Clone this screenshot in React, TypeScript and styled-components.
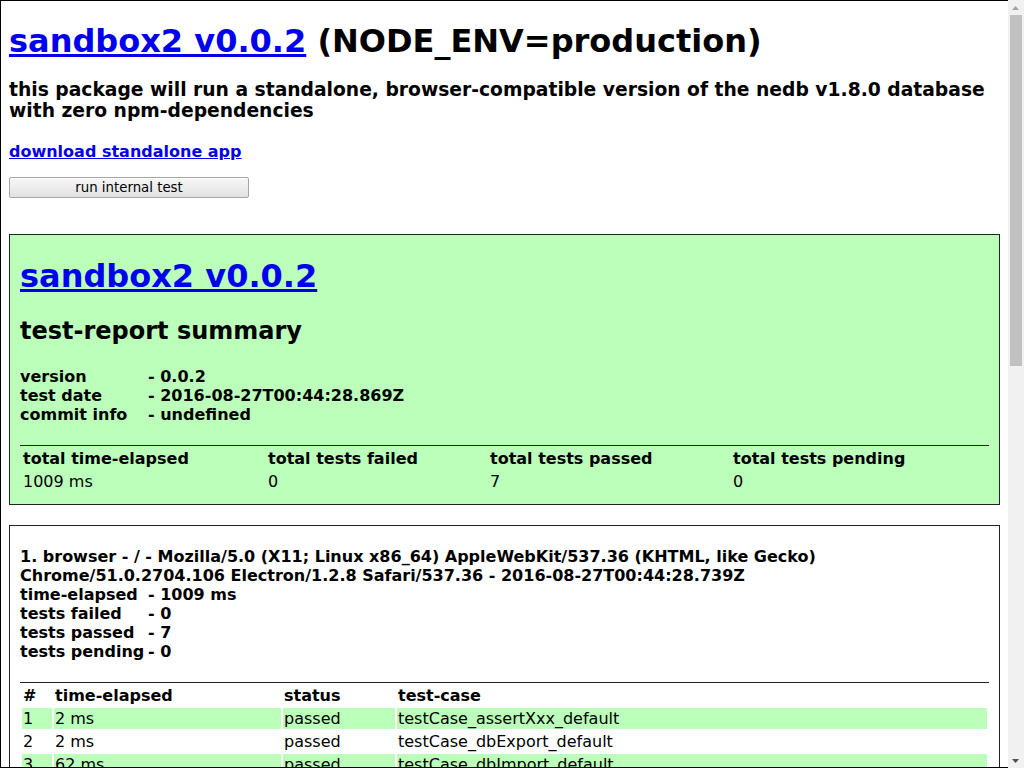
import React from "react";
import styled, { createGlobalStyle } from "styled-components";

const GlobalStyle = createGlobalStyle`
  html, body {
    margin: 0;
    padding: 0;
    height: 100%;
    overflow: hidden;
    background: #fff;
  }
  body {
    font-family: "DejaVu Sans", "Liberation Sans", sans-serif;
    color: #000;
  }
`;

const Window = styled.div`
  display: flex;
  height: 768px;
`;

const Viewport = styled.div`
  flex: 1;
  min-width: 0;
  box-sizing: border-box;
  border: 1px solid #000;
  border-right: 0;
  overflow: hidden;
`;

const ScrollBar = styled.div`
  flex: none;
  width: 16px;
  display: flex;
  flex-direction: column;
  background: #f1f1f1;
`;

const ScrollArrow = styled.div`
  flex: none;
  height: 15px;
  display: flex;
  align-items: center;
  justify-content: center;
  padding-right: 1px;
`;

const ScrollTrack = styled.div`
  flex: 1;
  display: flex;
  flex-direction: column;
`;

const ScrollThumb = styled.div`
  height: 351px;
  margin: 0 2px 0 2px;
  background: #c1c1c1;
`;

const Page = styled.div`
  margin: 8px;
`;

const Link = styled.a`
  color: #0000ee;
  text-decoration: underline;
  cursor: pointer;
`;

const MainTitle = styled.h1`
  font-size: 32px;
  font-weight: bold;
  margin: 21.44px 0 18px;
`;

const Tagline = styled.h3`
  font-size: 18.72px;
  font-weight: bold;
  margin: 18.72px 0;
`;

const DownloadLine = styled.h4`
  font-size: 16px;
  font-weight: bold;
  margin: 21.28px 0 16px;
`;

const ButtonRow = styled.div`
  display: flex;
  margin-bottom: 36px;
`;

const RunButton = styled.button`
  box-sizing: border-box;
  width: 240px;
  height: 21px;
  padding: 0 6px;
  font-family: "DejaVu Sans", sans-serif;
  font-size: 13.33px;
  color: #000;
  background: linear-gradient(#f7f7f7, #e2e2e2);
  border: 1px solid #a6a6a6;
  border-radius: 2px;
  box-shadow: inset 0 1px 0 #fff;
`;

const ReportCard = styled.div<{ $summary?: boolean }>`
  border: 1px solid #222;
  background: ${(p) => (p.$summary ? "#bbffbb" : "#fff")};
  margin-top: 20px;
  padding: 0 10px 10px;
  text-align: left;
`;

const CardTitle = styled.h1`
  font-size: 32px;
  font-weight: bold;
  margin: 21.44px 0 22.44px;
`;

const CardHeading = styled.h2`
  font-size: 24px;
  font-weight: bold;
  margin: 19.92px 0;
`;

const InfoBlock = styled.h4`
  font-size: 16px;
  font-weight: bold;
  margin: 21.28px 0;
`;

const InfoLabel = styled.span`
  display: inline-block;
  width: 8em;
`;

const ReportTable = styled.table`
  width: 100%;
  border-top: 1px solid #222;
  border-spacing: 2px;
  table-layout: fixed;
  text-align: left;
  font-size: 16px;
`;

const HeadCell = styled.th<{ $w?: number }>`
  box-sizing: border-box;
  padding: 1px;
  font-weight: bold;
  white-space: nowrap;
  width: ${(p) => (p.$w ? `${p.$w}px` : "auto")};
`;

const Row = styled.tr<{ $alt?: boolean }>`
  background: ${(p) => (p.$alt ? "#bbffbb" : "transparent")};
`;

const Cell = styled.td`
  padding: 1px;
  white-space: nowrap;
  overflow: hidden;
`;

const summaryInfo = [
  ["version", "- 0.0.2"],
  ["test date", "- 2016-08-27T00:44:28.869Z"],
  ["commit info", "- undefined"],
];

const summaryCols: [string, string, number?][] = [
  ["total time-elapsed", "1009 ms", 243],
  ["total tests failed", "0", 220],
  ["total tests passed", "7", 241],
  ["total tests pending", "0"],
];

const platformInfo = [
  ["time-elapsed", "- 1009 ms"],
  ["tests failed", "- 0"],
  ["tests passed", "- 7"],
  ["tests pending", "- 0"],
];

const tests = [
  ["2 ms", "testCase_assertXxx_default"],
  ["2 ms", "testCase_dbExport_default"],
  ["62 ms", "testCase_dbImport_default"],
  ["1 ms", "testCase_dbReset_default"],
  ["3 ms", "testCase_dbTableCreate_default"],
  ["5 ms", "testCase_dbTableDrop_default"],
  ["4 ms", "testCase_dbTableList_default"],
];

export default function App() {
  return (
    <>
      <GlobalStyle />
      <Window>
        <Viewport>
          <Page>
            <MainTitle>
              <Link>sandbox2 v0.0.2</Link> (NODE_ENV=production)
            </MainTitle>
            <Tagline>
              this package will run a standalone, browser-compatible version
              of the nedb v1.8.0 database with zero npm-dependencies
            </Tagline>
            <DownloadLine>
              <Link>download standalone app</Link>
            </DownloadLine>
            <ButtonRow>
              <RunButton>run internal test</RunButton>
            </ButtonRow>

            <ReportCard $summary>
              <CardTitle>
                <Link>sandbox2 v0.0.2</Link>
              </CardTitle>
              <CardHeading>test-report summary</CardHeading>
              <InfoBlock>
                {summaryInfo.map(([k, v]) => (
                  <div key={k}>
                    <InfoLabel>{k}</InfoLabel>
                    {v}
                  </div>
                ))}
              </InfoBlock>
              <ReportTable>
                <thead>
                  <tr>
                    {summaryCols.map(([h, , w]) => (
                      <HeadCell key={h} $w={w}>
                        {h}
                      </HeadCell>
                    ))}
                  </tr>
                </thead>
                <tbody>
                  <tr>
                    {summaryCols.map(([h, v]) => (
                      <Cell key={h}>{v}</Cell>
                    ))}
                  </tr>
                </tbody>
              </ReportTable>
            </ReportCard>

            <ReportCard>
              <InfoBlock>
                <div>
                  1. browser - / - Mozilla/5.0 (X11; Linux x86_64)
                  AppleWebKit/537.36 (KHTML, like Gecko) Chrome/51.0.2704.106
                  Electron/1.2.8 Safari/537.36 - 2016-08-27T00:44:28.739Z
                </div>
                {platformInfo.map(([k, v]) => (
                  <div key={k}>
                    <InfoLabel>{k}</InfoLabel>
                    {v}
                  </div>
                ))}
              </InfoBlock>
              <ReportTable>
                <thead>
                  <tr>
                    <HeadCell $w={30}>#</HeadCell>
                    <HeadCell $w={227}>time-elapsed</HeadCell>
                    <HeadCell $w={112}>status</HeadCell>
                    <HeadCell>test-case</HeadCell>
                  </tr>
                </thead>
                <tbody>
                  {tests.map(([t, name], i) => (
                    <Row key={name} $alt={i % 2 === 0}>
                      <Cell>{i + 1}</Cell>
                      <Cell>{t}</Cell>
                      <Cell>passed</Cell>
                      <Cell>{name}</Cell>
                    </Row>
                  ))}
                </tbody>
              </ReportTable>
            </ReportCard>
          </Page>
        </Viewport>
        <ScrollBar>
          <ScrollArrow>
            <svg width="7" height="4" viewBox="0 0 7 4">
              <polygon points="0,4 3.5,0 7,4" fill="#a3a3a3" />
            </svg>
          </ScrollArrow>
          <ScrollTrack>
            <ScrollThumb />
          </ScrollTrack>
          <ScrollArrow>
            <svg width="7" height="4" viewBox="0 0 7 4">
              <polygon points="0,0 7,0 3.5,4" fill="#505050" />
            </svg>
          </ScrollArrow>
        </ScrollBar>
      </Window>
    </>
  );
}
